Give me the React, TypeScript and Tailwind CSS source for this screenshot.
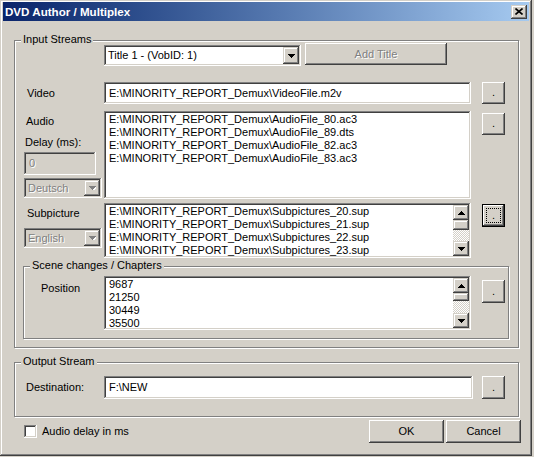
import type { ReactNode } from "react";

// classic win32 bevels, all done with inset shadows so they don't eat layout
const raised =
  "shadow-[inset_-1px_-1px_0_#404040,inset_1px_1px_0_#fff,inset_-2px_-2px_0_#808080,inset_2px_2px_0_#d4d0c8]";
const sunken =
  "shadow-[inset_-1px_-1px_0_#fff,inset_1px_1px_0_#808080,inset_-2px_-2px_0_#d4d0c8,inset_2px_2px_0_#404040]";
const smallRaised =
  "shadow-[inset_-1px_-1px_0_#404040,inset_1px_1px_0_#d4d0c8,inset_-2px_-2px_0_#808080,inset_2px_2px_0_#fff]";

const audioFiles = [
  "E:\\MINORITY_REPORT_Demux\\AudioFile_80.ac3",
  "E:\\MINORITY_REPORT_Demux\\AudioFile_89.dts",
  "E:\\MINORITY_REPORT_Demux\\AudioFile_82.ac3",
  "E:\\MINORITY_REPORT_Demux\\AudioFile_83.ac3",
];

const subFiles = [
  "E:\\MINORITY_REPORT_Demux\\Subpictures_20.sup",
  "E:\\MINORITY_REPORT_Demux\\Subpictures_21.sup",
  "E:\\MINORITY_REPORT_Demux\\Subpictures_22.sup",
  "E:\\MINORITY_REPORT_Demux\\Subpictures_23.sup",
];

const chapters = ["9687", "21250", "30449", "35500"];

function Arrow({ dir, gray }: { dir: "up" | "down"; gray?: boolean }) {
  const d =
    dir === "up"
      ? "M3 0h1v1h1v1h1v1h1v1H0V3h1V2h1V1h1z"
      : "M0 0h7v1H6v1H5v1H4v1H3V3H2V2H1V1H0z";
  return (
    <svg width="7" height="4" viewBox="0 0 7 4" className="block">
      {gray && <path d={d} fill="#fff" transform="translate(1 1)" />}
      <path d={d} fill={gray ? "#808080" : "#000"} />
    </svg>
  );
}

function Group({ label, className, children }: { label: string; className?: string; children?: ReactNode }) {
  return (
    <div className={`relative border border-[#808080] shadow-[1px_1px_0_#fff,inset_1px_1px_0_#fff] ${className ?? ""}`}>
      <span className="absolute -top-[8px] left-[6px] px-[2px] bg-[#d4d0c8] leading-[13px]">{label}</span>
      {children}
    </div>
  );
}

function Button({
  children,
  className,
  disabled,
  focused,
}: {
  children?: ReactNode;
  className?: string;
  disabled?: boolean;
  focused?: boolean;
}) {
  const text = disabled ? "text-[#808080] [text-shadow:1px_1px_0_#fff]" : "text-black";
  if (focused) {
    return (
      <div className={`border border-black ${className ?? ""}`}>
        <div className={`${raised} bg-[#d4d0c8] w-full h-full p-[3px] flex`}>
          <div className="flex-1 border border-dotted border-black flex items-center justify-center">
            {children}
          </div>
        </div>
      </div>
    );
  }
  return (
    <div className={`${raised} bg-[#d4d0c8] flex items-center justify-center ${text} ${className ?? ""}`}>
      {children}
    </div>
  );
}

function Browse({ className, focused }: { className?: string; focused?: boolean }) {
  return (
    <Button className={`w-[23px] ${className ?? ""}`} focused={focused}>
      <span className="leading-[13px] -mt-[1px]">.</span>
    </Button>
  );
}

function Combo({ value, className, disabled }: { value: string; className?: string; disabled?: boolean }) {
  return (
    <div className={`${sunken} ${disabled ? "bg-[#d4d0c8]" : "bg-white"} p-[2px] flex ${className ?? ""}`}>
      <div
        className={`flex-1 pl-[2px] flex items-center whitespace-nowrap overflow-hidden ${
          disabled ? "text-[#808080] [text-shadow:1px_1px_0_#fff]" : "text-black"
        }`}
      >
        {value}
      </div>
      <div className={`${smallRaised} bg-[#d4d0c8] w-[16px] flex items-center justify-center`}>
        <Arrow dir="down" gray={disabled} />
      </div>
    </div>
  );
}

function ScrollBar({ thumb }: { thumb: number }) {
  return (
    <div className="w-[16px] flex flex-col">
      <div className={`${smallRaised} bg-[#d4d0c8] h-[15px] flex items-center justify-center`}>
        <Arrow dir="up" />
      </div>
      <div className={`${smallRaised} bg-[#d4d0c8]`} style={{ height: thumb }} />
      <div className="flex-1 bg-[repeating-conic-gradient(#fff_0_25%,#d4d0c8_0_50%)] bg-[length:2px_2px]" />
      <div className={`${smallRaised} bg-[#d4d0c8] h-[15px] flex items-center justify-center`}>
        <Arrow dir="down" />
      </div>
    </div>
  );
}

function ListBox({ lines, className, thumb }: { lines: string[]; className?: string; thumb?: number }) {
  return (
    <div className={`${sunken} bg-white p-[2px] flex ${className ?? ""}`}>
      <div className="flex-1 overflow-hidden pl-[3px] whitespace-nowrap">
        {lines.map((l) => (
          <div key={l} className="h-[13px] leading-[13px]">
            {l}
          </div>
        ))}
      </div>
      {thumb !== undefined && <ScrollBar thumb={thumb} />}
    </div>
  );
}

function TextField({ value, className, disabled }: { value: string; className?: string; disabled?: boolean }) {
  return (
    <div
      className={`${sunken} ${
        disabled ? "bg-[#d4d0c8] text-[#808080] [text-shadow:1px_1px_0_#fff]" : "bg-white text-black"
      } pl-[5px] flex items-center whitespace-nowrap overflow-hidden ${className ?? ""}`}
    >
      {value}
    </div>
  );
}

export default function App() {
  return (
    <div className="w-[534px] h-[457px] bg-[#d4d0c8] font-['Liberation_Sans',Arial,sans-serif] text-[11px] leading-[13px] text-black">
      <div className="w-[532px] h-[456px] p-[3px] pt-[2px] flex flex-col shadow-[inset_-1px_-1px_0_#404040,inset_1px_1px_0_#d4d0c8,inset_-2px_-2px_0_#808080,inset_2px_2px_0_#fff]">
        {/* title bar */}
        <div className="h-[19px] bg-linear-to-r from-[#0a246a] to-[#a6caf0] flex items-center justify-between pl-[2px] pr-[2px]">
          <span className="text-white font-bold text-[11.6px]">DVD Author / Multiplex</span>
          <div className={`${smallRaised} bg-[#d4d0c8] w-[16px] h-[14px] flex items-center justify-center`}>
            <svg width="8" height="7" viewBox="0 0 8 7">
              <path d="M0.5 0.5L7.5 6.5M7.5 0.5L0.5 6.5" stroke="#000" strokeWidth="1.6" />
            </svg>
          </div>
        </div>

        <div className="flex flex-col pl-[11px]">
          <Group label="Input Streams" className="mt-[19px] w-[505px] h-[308px] flex flex-col">
            <div className="flex items-start mt-[2px] ml-[89px]">
              <Combo value="Title 1 - (VobID: 1)" className="mt-[2px] w-[197px] h-[21px]" />
              <Button disabled className="ml-[4px] w-[142px] h-[22px]">
                Add Title
              </Button>
            </div>

            <div className="flex items-center mt-[16px]">
              <div className="w-[89px] pl-[12px]">Video</div>
              <TextField value="E:\MINORITY_REPORT_Demux\VideoFile.m2v" className="w-[367px] h-[22px]" />
              <Browse className="ml-[11px] h-[22px]" />
            </div>

            <div className="flex items-start mt-[7px]">
              <div className="w-[89px] flex flex-col">
                <div className="pt-[4px] pl-[11px]">Audio</div>
                <div className="mt-[8px] pl-[10px]">Delay (ms):</div>
                <TextField value="0" disabled className="mt-[3px] ml-[9px] w-[72px] h-[23px] pl-[4px]" />
                <Combo value="Deutsch" disabled className="mt-[3px] ml-[9px] w-[78px] h-[20px]" />
              </div>
              <ListBox lines={audioFiles} className="w-[367px] h-[88px]" />
              <Browse className="ml-[11px] mt-[2px] h-[22px]" />
            </div>

            <div className="flex items-start mt-[4px]">
              <div className="w-[89px] flex flex-col">
                <div className="pt-[4px] pl-[12px]">Subpicture</div>
                <Combo value="English" disabled className="mt-[8px] ml-[9px] w-[78px] h-[20px]" />
              </div>
              <ListBox lines={subFiles} thumb={10} className="w-[367px] h-[55px]" />
              <Browse focused className="ml-[11px] mt-[1px] h-[23px]" />
            </div>

            <Group label="Scene changes / Chapters" className="mt-[8px] ml-[8px] w-[486px] h-[73px]">
              <div className="flex items-start">
                <div className="w-[80px] pl-[17px] pt-[15px]">Position</div>
                <ListBox lines={chapters} thumb={8} className="mt-[9px] w-[367px] h-[54px]" />
                <Browse className="ml-[11px] mt-[13px] h-[23px]" />
              </div>
            </Group>
          </Group>

          <Group label="Output Stream" className="mt-[14px] w-[505px] h-[55px]">
            <div className="flex items-center mt-[13px]">
              <div className="w-[89px] pl-[11px]">Destination:</div>
              <TextField value="F:\NEW" className="w-[369px] h-[23px]" />
              <Browse className="ml-[9px] h-[23px]" />
            </div>
          </Group>

          <div className="flex items-center mt-[3px] mr-[8px]">
            <div className={`${sunken} bg-white w-[13px] h-[13px] ml-[10px]`} />
            <span className="ml-[5px]">Audio delay in ms</span>
            <Button className="ml-auto w-[75px] h-[23px]">OK</Button>
            <Button className="ml-[2px] w-[75px] h-[23px]">Cancel</Button>
          </div>
        </div>
      </div>
    </div>
  );
}
